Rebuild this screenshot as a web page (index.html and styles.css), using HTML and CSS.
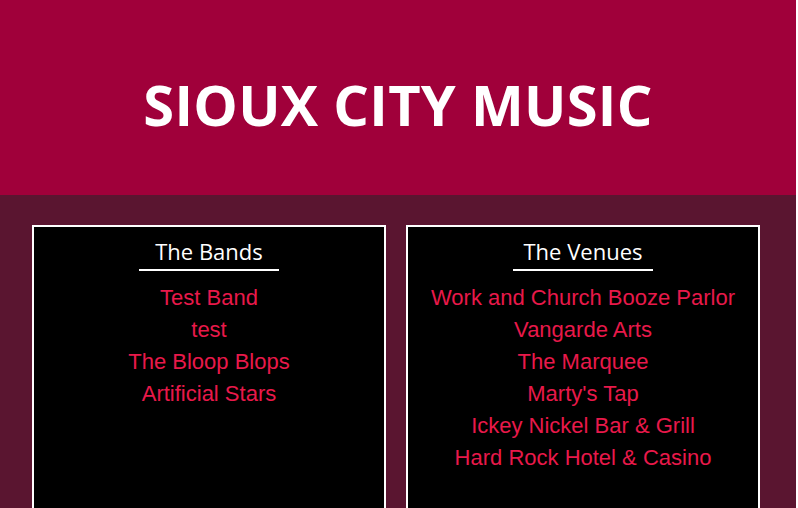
FILE: index.html
```html
<!DOCTYPE html>
<html>
<head>
<meta charset="utf-8">
<link rel="stylesheet" href="styles.css">
</head>
<body>
<div class="page">
  <header class="hero">
    <h1 class="title">SIOUX CITY MUSIC</h1>
  </header>
  <main class="lists">
    <section class="card">
      <h2 class="card-title">The Bands</h2>
      <ul class="items">
        <li><a href="#">Test Band</a></li>
        <li><a href="#">test</a></li>
        <li><a href="#">The Bloop Blops</a></li>
        <li><a href="#">Artificial Stars</a></li>
      </ul>
    </section>
    <section class="card">
      <h2 class="card-title">The Venues</h2>
      <ul class="items">
        <li><a href="#">Work and Church Booze Parlor</a></li>
        <li><a href="#">Vangarde Arts</a></li>
        <li><a href="#">The Marquee</a></li>
        <li><a href="#">Marty's Tap</a></li>
        <li><a href="#">Ickey Nickel Bar &amp; Grill</a></li>
        <li><a href="#">Hard Rock Hotel &amp; Casino</a></li>
      </ul>
    </section>
  </main>
</div>
</body>
</html>
```

FILE: styles.css
```css
html, body {
  margin: 0;
  padding: 0;
  background: #ffffff;
  overflow: hidden;
}
.page {
  width: 796px;
  height: 508px;
  background: #5a1530;
  overflow: hidden;
}
.hero {
  height: 195px;
  box-sizing: border-box;
  padding-top: 12px;
  background: #a0003a;
  display: flex;
  align-items: center;
  justify-content: center;
}
.title {
  margin: 0;
  color: #ffffff;
  font-family: "Open Sans", sans-serif;
  font-weight: 700;
  font-size: 56px;
  letter-spacing: 0.3px;
  line-height: 1;
}
.lists {
  display: grid;
  grid-template-columns: 354px 354px;
  gap: 20px;
  padding: 30px 0 0 32px;
}
.card {
  background: #000000;
  border: 2px solid #ffffff;
  height: 320px;
  display: flex;
  flex-direction: column;
  align-items: center;
}
.card-title {
  margin: 9px 0 0;
  width: 140px;
  text-align: center;
  color: #ffffff;
  font-family: "Open Sans", sans-serif;
  font-weight: 500;
  font-size: 22px;
  line-height: 30px;
  padding-bottom: 3px;
  border-bottom: 2px solid #ffffff;
}
.items {
  list-style: none;
  margin: 11px 0 0;
  padding: 0;
  text-align: center;
  font-family: "Liberation Sans", Arial, sans-serif;
  font-size: 22px;
  line-height: 32px;
}
.items a {
  color: #e8194a;
  text-decoration: none;
}
```
